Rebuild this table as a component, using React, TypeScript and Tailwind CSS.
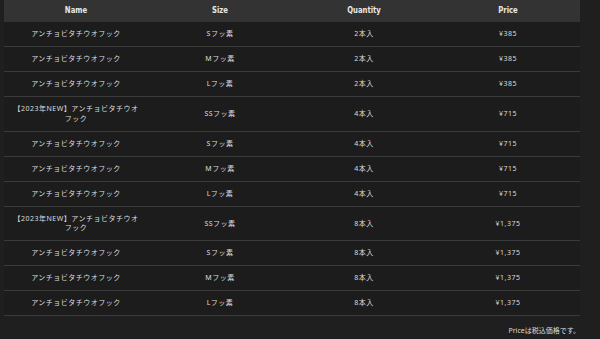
import React from "react";

type Row = { name: React.ReactNode; size: string; qty: string; price: string; tall?: boolean };

const NEW = (
  <>
    【2023年NEW】アンチョビタチウオ
    <br />
    フック
  </>
);

const rows: Row[] = [
  { name: "アンチョビタチウオフック", size: "Sフッ素", qty: "2本入", price: "¥385" },
  { name: "アンチョビタチウオフック", size: "Mフッ素", qty: "2本入", price: "¥385" },
  { name: "アンチョビタチウオフック", size: "Lフッ素", qty: "2本入", price: "¥385" },
  { name: NEW, size: "SSフッ素", qty: "4本入", price: "¥715", tall: true },
  { name: "アンチョビタチウオフック", size: "Sフッ素", qty: "4本入", price: "¥715" },
  { name: "アンチョビタチウオフック", size: "Mフッ素", qty: "4本入", price: "¥715" },
  { name: "アンチョビタチウオフック", size: "Lフッ素", qty: "4本入", price: "¥715" },
  { name: NEW, size: "SSフッ素", qty: "8本入", price: "¥1,375", tall: true },
  { name: "アンチョビタチウオフック", size: "Sフッ素", qty: "8本入", price: "¥1,375" },
  { name: "アンチョビタチウオフック", size: "Mフッ素", qty: "8本入", price: "¥1,375" },
  { name: "アンチョビタチウオフック", size: "Lフッ素", qty: "8本入", price: "¥1,375" },
];

const bodyFont = { fontFamily: '"Noto Sans", "Noto Sans CJK JP", sans-serif' };
const headFont = { fontFamily: '"DejaVu Sans Condensed", "DejaVu Sans", sans-serif' };

export default function App() {
  return (
    <div className="w-[600px] h-[339px] bg-[#1f1f1f] overflow-hidden" style={bodyFont}>
      <div className="ml-[4px] w-[576px] bg-[#1c1c1c]">
        <div
          className="grid grid-cols-4 h-[22px] items-center bg-[#333333] text-[#e8e8e8] text-[9px] font-bold"
          style={headFont}
        >
          <div className="text-center scale-x-[0.85]">Name</div>
          <div className="text-center scale-x-[0.85]">Size</div>
          <div className="text-center scale-x-[0.85]">Quantity</div>
          <div className="text-center scale-x-[0.85]">Price</div>
        </div>
        {rows.map((r, i) => (
          <div
            key={i}
            className={`grid grid-cols-4 items-center border-b border-[#3a3a3a] text-[7px] leading-[9.5px] text-[#dcdcdc] tracking-[0.5px] ${
              r.tall ? "h-[34.5px]" : "h-[25px]"
            }`}
          >
            <div className="text-center px-2">{r.name}</div>
            <div className="text-center">{r.size}</div>
            <div className="text-center">{r.qty}</div>
            <div className="text-center">{r.price}</div>
          </div>
        ))}
        <div className="bg-[#1f1f1f] flex justify-end pt-[10px] text-[7px] leading-[9px] text-[#dcdcdc]">
          Priceは税込価格です。
        </div>
      </div>
    </div>
  );
}
